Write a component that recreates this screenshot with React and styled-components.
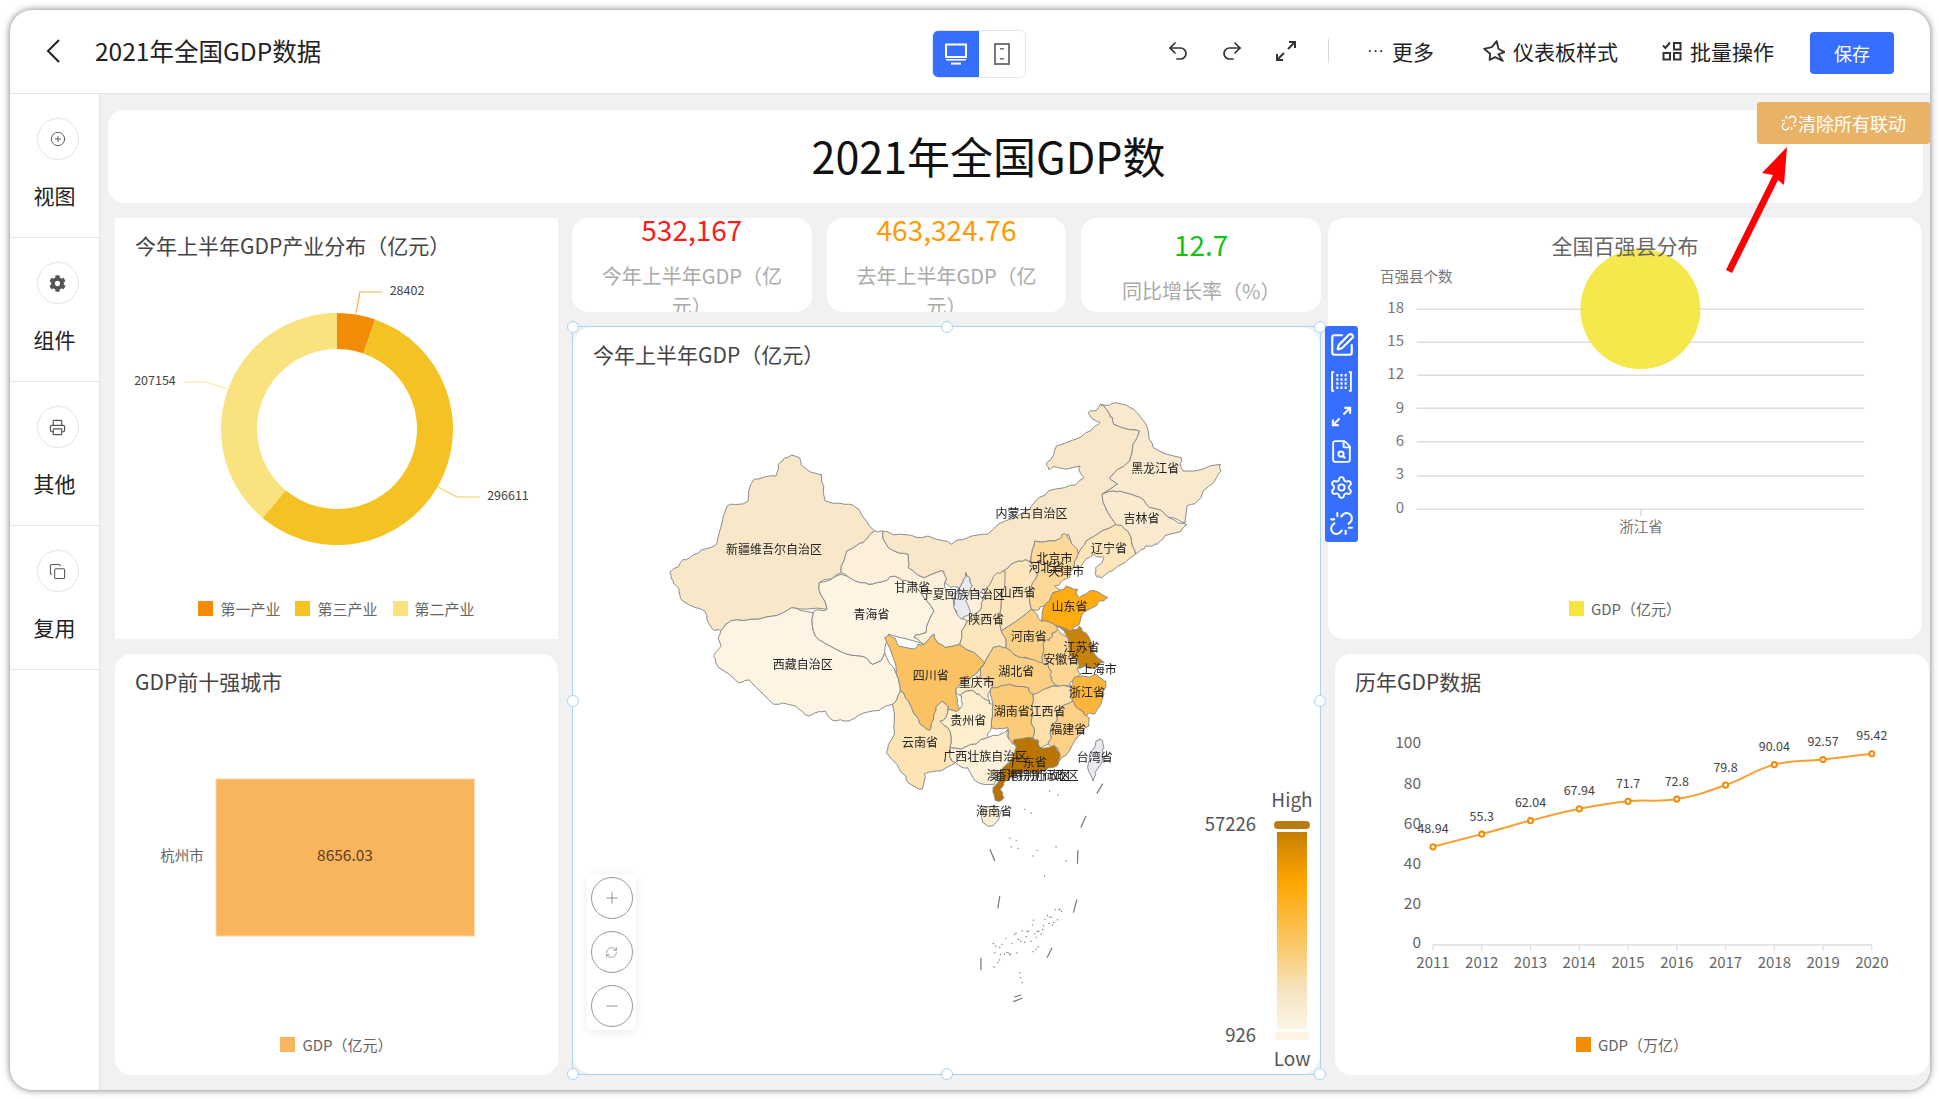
import React from 'react';
import styled, { createGlobalStyle } from 'styled-components';
import { CirclePlus, Copy, FileSearch, Minus, Plus, Printer, Redo2, RefreshCw, Settings, SquarePen, Undo2, Unlink } from 'lucide-react';
import { FaCog } from 'react-icons/fa';

const GlobalStyle = createGlobalStyle`
  html, body { margin: 0; padding: 0; background: #fff; }
  * { box-sizing: border-box; }
  body { font-family: "Noto Sans CJK SC", "Noto Sans", sans-serif; color: #222; }
`;

const arc = (cx, cy, R, r, from, to) => {
  const pt = (rad, deg) => {
    const a = ((deg - 90) * Math.PI) / 180;
    return `${cx + rad * Math.cos(a)} ${cy + rad * Math.sin(a)}`;
  };
  const big = to - from > 180 ? 1 : 0;
  return `M${pt(R, from)} A${R} ${R} 0 ${big} 1 ${pt(R, to)} L${pt(r, to)} A${r} ${r} 0 ${big} 0 ${pt(r, from)} Z`;
};

const smooth = (pts) => {
  let d = `M${pts[0][0]} ${pts[0][1]}`;
  for (let i = 0; i < pts.length - 1; i++) {
    const p0 = pts[i - 1] || pts[i];
    const p1 = pts[i];
    const p2 = pts[i + 1];
    const p3 = pts[i + 2] || p2;
    d += ` C${p1[0] + (p2[0] - p0[0]) / 5} ${p1[1] + (p2[1] - p0[1]) / 5} ${p2[0] - (p3[0] - p1[0]) / 5} ${p2[1] - (p3[1] - p1[1]) / 5} ${p2[0]} ${p2[1]}`;
  }
  return d;
};

// map outlines were traced on a stretched crop, mapX/mapY bring them back to page pixels
const mapX = (x) => 640 + x / 2.53;
const mapY = (y) => 380 + y / 3;

const frac = (v) => v - Math.floor(v);

const wobble = (pts, amp) => {
  const out = [];
  pts.forEach((p, i) => {
    const q = pts[(i + 1) % pts.length];
    const h = Math.sin((p[0] + q[0]) * 12.9898 + (p[1] + q[1]) * 78.233) * 43758.5453;
    out.push(p);
    out.push([(p[0] + q[0]) / 2 + (frac(h) - 0.5) * amp, (p[1] + q[1]) / 2 + (frac(h * 7) - 0.5) * amp]);
  });
  return out;
};

const shape = (str) => {
  const pts = str.split(' ').map((s) => s.split(',').map(Number));
  return wobble(wobble(pts, 14), 7).map((p) => `${mapX(p[0]).toFixed(1)},${mapY(p[1]).toFixed(1)}`).join(' ');
};

const provinces = [
  ['#f8e7c9', '80,570 110,535 150,515 195,490 222,375 275,360 290,295 345,285 355,245 385,222 405,230 420,262 460,280 470,360 520,370 555,385 595,450 565,485 525,510 510,575 455,605 475,685 385,680 300,715 230,720 205,750 185,745 165,690 110,660 100,630 85,600'],
  ['#fdf4e4', '205,750 230,720 300,715 385,680 440,695 445,765 490,800 560,825 590,850 620,815 650,880 660,930 640,970 570,995 530,1020 500,1020 470,990 430,1005 395,975 340,970 280,900 250,905 200,860 190,820 205,790'],
  ['#fdf4e4', '455,605 510,580 560,605 600,605 645,585 690,605 745,690 725,755 695,770 720,790 630,760 620,815 590,850 560,825 490,800 445,765 440,695 475,685'],
  ['#fdf1dc', '510,575 525,510 565,485 595,450 615,450 630,500 680,520 680,560 720,590 770,570 772,605 790,640 800,690 830,720 810,790 775,800 745,760 720,790 695,770 725,755 745,690 690,605 645,585 600,605 560,605'],
  ['#f8e7c9', '615,450 680,462 730,465 790,490 830,470 880,460 950,410 1010,350 1075,320 1125,290 1115,255 1060,260 1035,265 1030,245 1055,195 1130,155 1165,125 1135,95 1165,70 1190,100 1200,130 1265,150 1240,240 1190,290 1210,310 1170,340 1205,430 1130,480 1110,520 1085,460 1050,480 1000,480 990,540 960,540 920,570 880,620 860,640 835,630 835,590 825,575 810,620 772,605 770,570 720,590 680,560 680,520 630,500'],
  ['#f8e9cf', '1165,70 1205,65 1250,85 1285,140 1300,200 1370,230 1375,270 1470,250 1460,290 1420,350 1385,375 1380,425 1340,410 1310,385 1290,380 1255,345 1215,330 1170,340 1210,310 1190,290 1240,240 1265,150 1200,130 1190,100'],
  ['#f9ead0', '1170,340 1215,330 1255,345 1290,380 1310,385 1340,410 1385,430 1340,460 1310,490 1280,495 1255,520 1235,450 1205,430'],
  ['#fde6bc', '1110,520 1130,480 1205,430 1235,450 1255,520 1195,570 1170,590 1160,590 1155,570 1175,530 1150,520 1115,560 1100,550'],
  ['#fdd898', '990,540 1000,480 1050,480 1075,458 1090,480 1110,520 1100,550 1085,590 1050,615 1080,630 1046,635 1024,675 991,685 990,620 1005,575'],
  ['#fde6bc', '920,570 960,540 990,540 1005,575 990,620 991,685 915,750 915,660'],
  ['#fde6bc', '880,620 905,575 925,570 915,660 915,750 927,800 894,800 873,845 810,790 830,720 860,690 875,650'],
  ['#fdf1dc', '835,630 860,640 875,650 860,690 830,720 800,690 790,640 810,620'],
  ['#e8eaf0', '810,620 825,575 835,590 835,630 825,660 835,700 815,715 795,680'],
  ['#fcd084', '915,750 991,685 1016,720 1054,735 1058,745 1041,770 1024,780 1020,845 991,835 970,830 927,800'],
  ['#ffab12', '1024,675 1046,635 1079,615 1109,625 1113,650 1138,630 1185,650 1160,665 1138,685 1113,730 1088,750 1054,735 1016,720'],
  ['#c9820a', '1054,735 1088,750 1113,735 1138,770 1147,810 1176,845 1155,860 1130,855 1109,860 1105,835 1088,820 1084,770'],
  ['#fdd694', '1024,780 1041,770 1058,745 1084,770 1088,820 1105,835 1109,860 1117,880 1096,900 1092,916 1054,912 1037,880 1033,850 1020,845'],
  ['#fdb63b', '1117,885 1155,880 1180,900 1172,950 1151,1000 1130,1005 1105,980 1096,960 1092,920 1096,900'],
  ['#fdd088', '1096,960 1105,980 1130,1005 1138,1010 1121,1050 1096,1090 1062,1140 1058,1100 1033,1090 1041,1040 1062,990'],
  ['#fee0aa', '995,940 1045,915 1092,920 1096,960 1062,990 1041,1040 1033,1090 1012,1100 1003,1080 995,1070 991,1020'],
  ['#fcd084', '894,800 927,800 970,830 1020,845 1033,850 1037,880 1054,912 995,940 982,920 936,910 890,920 885,900 860,890 873,845'],
  ['#fccb77', '890,920 936,910 982,920 995,940 991,1020 995,1070 961,1075 944,1090 932,1040 890,1040 894,970'],
  ['#fdf1da', '785,1100 830,1095 880,1070 932,1045 944,1090 949,1080 953,1110 940,1145 923,1170 898,1210 850,1200 830,1160 800,1145 785,1130'],
  ['#b97500', '945,1080 974,1072 1002,1078 1012,1098 1050,1093 1064,1120 1060,1148 1029,1165 995,1175 940,1185 922,1205 912,1225 920,1252 900,1258 894,1220 918,1170 936,1145 950,1110'],
  ['#fbeed5', '873,1280 898,1275 915,1295 906,1320 881,1335 868,1320'],
  ['#e8eaf0', '1155,1080 1172,1078 1172,1110 1155,1170 1147,1200 1134,1160 1138,1130'],
  ['#fbc264', '620,770 630,760 655,795 700,800 720,790 745,760 775,800 810,790 873,845 850,880 810,910 800,930 810,985 780,985 765,960 745,1000 735,1048 710,1030 680,960 660,930 650,880'],
  ['#fdeccb', '873,845 860,890 885,900 890,920 885,960 860,940 830,930 815,945 800,930 810,910 850,880'],
  ['#fdeecd', '815,945 830,930 860,940 885,960 894,970 890,1040 880,1070 830,1095 785,1100 780,1040 760,1020 780,985 810,985'],
  ['#fde4b5', '640,970 660,930 680,960 710,1030 735,1048 745,1000 765,960 780,985 760,1020 780,1040 785,1100 785,1130 800,1145 760,1170 720,1180 715,1225 680,1205 660,1170 625,1115 645,1060'],
];

const mapLabels = [
  ['黑龙江省', 1305, 263], ['内蒙古自治区', 992, 400], ['吉林省', 1270, 415], ['辽宁省', 1188, 503],
  ['新疆维吾尔自治区', 340, 508], ['甘肃省', 690, 622], ['宁夏回族自治区', 818, 643], ['山西省', 957, 635],
  ['北京市', 1050, 535], ['河北省', 1030, 560], ['天津市', 1080, 572], ['山东省', 1088, 678],
  ['青海省', 587, 703], ['陕西省', 877, 718], ['河南省', 985, 768], ['江苏省', 1118, 800],
  ['安徽省', 1067, 838], ['上海市', 1162, 867], ['西藏自治区', 413, 851], ['四川省', 737, 884],
  ['湖北省', 953, 872], ['重庆市', 853, 905], ['浙江省', 1132, 936], ['湖南省', 942, 992],
  ['江西省', 1032, 993], ['贵州省', 832, 1021], ['福建省', 1085, 1047], ['云南省', 710, 1086],
  ['广西壮族自治区', 875, 1127], ['广东省', 985, 1145], ['台湾省', 1152, 1132], ['澳门特别行政区', 985, 1185],
  ['香港特别行政区', 1005, 1185], ['海南省', 897, 1293],
];

// nine-dash line and islands, taken from the lower crop: x = 560 + zx / 2.01, y = 760 + zy / 3
const dashes = [
  [1092, 68, 1080, 98], [1058, 165, 1048, 200], [1042, 268, 1041, 308], [1040, 415, 1033, 455], [990, 560, 980, 590],
  [847, 590, 847, 628], [885, 405, 881, 442], [865, 265, 875, 300], [914, 708, 928, 702], [912, 722, 931, 711],
];
const dots = [
  [985, 90], [1002, 102], [935, 145], [948, 156], [905, 232], [918, 238], [908, 258], [922, 262], [960, 268], [952, 285],
  [1018, 300], [998, 258], [975, 345], [925, 635], [927, 650], [930, 665], [958, 565], [952, 572], [962, 558], [875, 575], [885, 560],
];
for (let i = 0; i < 46; i++) {
  const along = frac(i * 0.618);
  dots.push([872 + along * 140, 585 - along * 130 + (frac(Math.sin(i * 9.7) * 4375.85) - 0.5) * 75]);
}

const donut = [
  { from: 0, to: 19.2, color: '#f28c07' },
  { from: 19.2, to: 219.9, color: '#f5c224' },
  { from: 219.9, to: 360, color: '#fae27f' },
];

const years = [2011, 2012, 2013, 2014, 2015, 2016, 2017, 2018, 2019, 2020];
const gdp = [48.94, 55.3, 62.04, 67.94, 71.7, 72.8, 79.8, 90.04, 92.57, 95.42];
const gdpPts = gdp.map((v, i) => [1433 + i * 48.76, 944.7 - v * 2]);

const App = () => (
  <Page>
    <GlobalStyle />
    <Window>
      <Header>
        <HeaderLeft>
          <svg width="16" height="26" viewBox="0 0 16 26">
            <polyline points="14,2 3,13 14,24" fill="none" stroke="#222" strokeWidth="2" />
          </svg>
          <PageName>2021年全国GDP数据</PageName>
        </HeaderLeft>
        <DeviceToggle>
          <DeviceBtn $active>
            <svg width="24" height="22" viewBox="0 0 24 22">
              <rect x="2" y="1.5" width="20" height="12.5" fill="none" stroke="#fff" strokeWidth="2" />
              <rect x="2" y="16" width="20" height="1.6" fill="#fff" />
              <rect x="7" y="19.6" width="10" height="2" fill="#fff" />
            </svg>
          </DeviceBtn>
          <DeviceBtn>
            <svg width="16" height="22" viewBox="0 0 16 22">
              <rect x="1" y="1" width="14" height="20" fill="none" stroke="#777" strokeWidth="2" />
              <rect x="6" y="5" width="4" height="1.6" fill="#777" />
              <rect x="6" y="15" width="4" height="1.6" fill="#777" />
            </svg>
          </DeviceBtn>
        </DeviceToggle>
        <HeaderRight>
          <ToolIcon><Undo2 size={24} strokeWidth={1.7} /></ToolIcon>
          <ToolIcon $gap={30}><Redo2 size={24} strokeWidth={1.7} /></ToolIcon>
          <ToolIcon $gap={30}>
            <svg width="24" height="24" viewBox="0 0 24 24" fill="none" stroke="#333" strokeWidth="2">
              <path d="M14 10l7-7M15 3h6v6M10 14l-7 7M3 15v6h6" />
            </svg>
          </ToolIcon>
          <Divider />
          <ToolText $gap={38}><Dots>···</Dots>更多</ToolText>
          <ToolText $gap={49}>
            <svg width="22" height="22" viewBox="0 0 20 20" fill="none" stroke="#333" strokeWidth="1.7" strokeLinejoin="round">
              <path d="M12.5 1L14 8l5.5 3-5.5 2 4 6-7-3.5L6 18l.5-5.5L1 8l7-1.5z" />
            </svg>
            仪表板样式
          </ToolText>
          <ToolText $gap={44}>
            <svg width="20" height="20" viewBox="0 0 20 20" fill="none" stroke="#333" strokeWidth="2">
              <path d="M1 4.5l2.5 2.5L8 1.5" />
              <rect x="12" y="2" width="6.5" height="6.5" />
              <rect x="1.5" y="12" width="6.5" height="6.5" />
              <rect x="12" y="12" width="6.5" height="6.5" />
            </svg>
            批量操作
          </ToolText>
          <SaveButton>保存</SaveButton>
        </HeaderRight>
      </Header>
      <Body>
        <Sidebar>
          <SideItem>
            <SideCircle><CirclePlus size={16} strokeWidth={1.4} /></SideCircle>
            <SideLabel>视图</SideLabel>
          </SideItem>
          <SideItem>
            <SideCircle><FaCog size={17} /></SideCircle>
            <SideLabel>组件</SideLabel>
          </SideItem>
          <SideItem>
            <SideCircle><Printer size={17} strokeWidth={1.7} /></SideCircle>
            <SideLabel>其他</SideLabel>
          </SideItem>
          <SideItem>
            <SideCircle><Copy size={17} strokeWidth={1.5} /></SideCircle>
            <SideLabel>复用</SideLabel>
          </SideItem>
        </Sidebar>
        <Main>
          <TitleBar>2021年全国GDP数</TitleBar>
          <Board>
            <Column>
              <Card $square>
                <CardTitle>今年上半年GDP产业分布（亿元）</CardTitle>
                <ChartSvg viewBox="115 276 443 303">
                  {donut.map((s) => (
                    <path key={s.color} d={arc(337, 429, 116, 80, s.from, s.to)} fill={s.color} />
                  ))}
                  <polyline points="356,313 360,292 382,292" fill="none" stroke="#f6a94a" strokeWidth="1.2" />
                  <polyline points="184,382 206,382 227,389" fill="none" stroke="#fbe69a" strokeWidth="1.2" />
                  <polyline points="438,487 457,497 480,497" fill="none" stroke="#f7cf55" strokeWidth="1.2" />
                  <ChartText x="407" y="295" textAnchor="middle" $size={12.5}>28402</ChartText>
                  <ChartText x="155" y="385" textAnchor="middle" $size={12.5}>207154</ChartText>
                  <ChartText x="508" y="500" textAnchor="middle" $size={12.5}>296611</ChartText>
                </ChartSvg>
                <Legend>
                  <LegendItem $color="#f28c07">第一产业</LegendItem>
                  <LegendItem $color="#f5c224">第三产业</LegendItem>
                  <LegendItem $color="#fae27f">第二产业</LegendItem>
                </Legend>
              </Card>
              <Card>
                <CardTitle>GDP前十强城市</CardTitle>
                <ChartSvg viewBox="115 712 443 303">
                  <rect x="216" y="779" width="258.5" height="157" fill="#f9b55e" stroke="#fcd9a8" />
                  <ChartText x="345" y="861" textAnchor="middle" $size={15.5} $fill="#5a4020">8656.03</ChartText>
                  <ChartText x="182" y="861" textAnchor="middle" $size={14.5} $fill="#666">杭州市</ChartText>
                </ChartSvg>
                <Legend>
                  <LegendItem $color="#f9b55e">GDP（亿元）</LegendItem>
                </Legend>
              </Card>
            </Column>
            <MiddleColumn>
              <KpiRow>
                <KpiCard>
                  <KpiValue $color="#ff1a1a">532,167</KpiValue>
                  <KpiLabel>今年上半年GDP（亿元）</KpiLabel>
                </KpiCard>
                <KpiCard>
                  <KpiValue $color="#ff9a05">463,324.76</KpiValue>
                  <KpiLabel>去年上半年GDP（亿元）</KpiLabel>
                </KpiCard>
                <KpiCard>
                  <KpiValue $color="#12c212">12.7</KpiValue>
                  <KpiLabel>同比增长率（%）</KpiLabel>
                </KpiCard>
              </KpiRow>
              <SelectionFrame>
                <MapCard>
                  <CardTitle>今年上半年GDP（亿元）</CardTitle>
                  <MapSvg viewBox="573.5 384 746 690">
                    {provinces.map(([color, pts]) => (
                      <polygon key={pts} points={shape(pts)} fill={color} stroke="#8b8b8b" strokeWidth="1" strokeLinejoin="round" />
                    ))}
                    {dashes.map((d) => (
                      <line key={d.join()} x1={560 + d[0] / 2.01} y1={760 + d[1] / 3} x2={560 + d[2] / 2.01} y2={760 + d[3] / 3} stroke="#777" strokeWidth="1.2" />
                    ))}
                    {dots.map((d, i) => (
                      <circle key={i} cx={560 + d[0] / 2.01} cy={760 + d[1] / 3} r="0.7" fill="#777" />
                    ))}
                    {mapLabels.map(([name, x, y]) => (
                      <ChartText key={name} x={mapX(x)} y={mapY(y) + 4} textAnchor="middle" $size={12} $fill="#222">{name}</ChartText>
                    ))}
                  </MapSvg>
                  <ZoomPanel>
                    <ZoomButton><Plus size={18} strokeWidth={1.2} /></ZoomButton>
                    <ZoomButton><RefreshCw size={13} strokeWidth={1.4} /></ZoomButton>
                    <ZoomButton><Minus size={18} strokeWidth={1.2} /></ZoomButton>
                  </ZoomPanel>
                  <VisualMap>
                    <VisualText>High</VisualText>
                    <VisualValue $top={24}>57226</VisualValue>
                    <VisualCap $color="#b87c12" $margin="11px 0 0" />
                    <VisualBar />
                    <VisualCap $color="#fdf4e3" $margin="3px 0 0" />
                    <VisualValue $top={235}>926</VisualValue>
                    <VisualText $margin="7px 0 0">Low</VisualText>
                  </VisualMap>
                </MapCard>
                <Handle $x="0%" $y="0%" />
                <Handle $x="50%" $y="0%" />
                <Handle $x="100%" $y="0%" />
                <Handle $x="0%" $y="50%" />
                <Handle $x="100%" $y="50%" />
                <Handle $x="0%" $y="100%" />
                <Handle $x="50%" $y="100%" />
                <Handle $x="100%" $y="100%" />
                <SideTools>
                  <SquarePen size={26} strokeWidth={2} />
                  <svg width="25" height="25" viewBox="0 0 24 24" fill="none" stroke="#fff" strokeWidth="1.8">
                    <path d="M5 3H3v18h2M19 3h2v18h-2" />
                    <path d="M7 6h2M11 6h2M15 6h2M7 10h2M11 10h2M15 10h2M7 14h2M11 14h2M15 14h2M7 18h2M11 18h2M15 18h2" strokeWidth="2.4" />
                  </svg>
                  <svg width="23" height="23" viewBox="0 0 24 24" fill="none" stroke="#fff" strokeWidth="2.2">
                    <path d="M14 10l7-7M15 3h6v6M10 14l-7 7M3 15v6h6" />
                  </svg>
                  <FileSearch size={25} strokeWidth={1.8} />
                  <Settings size={25} strokeWidth={1.8} />
                  <Unlink size={25} strokeWidth={2} />
                </SideTools>
              </SelectionFrame>
            </MiddleColumn>
            <RightColumn>
              <Card $width={594}>
                <CardTitle $center $color="#666">全国百强县分布</CardTitle>
                <ChartSvg viewBox="1328 276 594 303">
                  {[309.3, 342.3, 375.3, 408.3, 441.7, 476, 509.3].map((y) => (
                    <line key={y} x1="1416.7" x2="1864.5" y1={y} y2={y} stroke="#ddd" strokeWidth="1.5" />
                  ))}
                  <ellipse cx="1640.4" cy="309" rx="60" ry="60" fill="#f4e63e" fillOpacity="0.92" />
                  <line x1="1641" x2="1641" y1="509" y2="516" stroke="#ddd" strokeWidth="1.5" />
                  <ChartText x="1380" y="282" $size={14.5} $fill="#777">百强县个数</ChartText>
                  {[['18', 307], ['15', 340.5], ['12', 373.5], ['9', 407], ['6', 440.5], ['3', 473.5], ['0', 507]].map(([t, y]) => (
                    <ChartText key={t} x="1404" y={y + 5.5} textAnchor="end" $size={15} $fill="#777">{t}</ChartText>
                  ))}
                  <ChartText x="1641" y="532" textAnchor="middle" $size={14.5} $fill="#777">浙江省</ChartText>
                </ChartSvg>
                <Legend>
                  <LegendItem $color="#f4e63e">GDP（亿元）</LegendItem>
                </Legend>
              </Card>
              <Card $width={594} $shift={7}>
                <CardTitle>历年GDP数据</CardTitle>
                <ChartSvg viewBox="1335 712 594 303">
                  <line x1="1433" x2="1872" y1="945" y2="945" stroke="#ddd" strokeWidth="1.5" />
                  {[[100, 742.7], [80, 783], [60, 823], [40, 863], [20, 903], [0, 942.7]].map(([v, y]) => (
                    <ChartText key={v} x="1421" y={y + 5.5} textAnchor="end" $size={15.5} $fill="#666">{v}</ChartText>
                  ))}
                  {years.map((y, i) => (
                    <g key={y}>
                      <line x1={gdpPts[i][0]} x2={gdpPts[i][0]} y1="945" y2="951" stroke="#ddd" strokeWidth="1.2" />
                      <ChartText x={gdpPts[i][0]} y="967.5" textAnchor="middle" $size={15} $fill="#666">{y}</ChartText>
                    </g>
                  ))}
                  <path d={smooth(gdpPts)} fill="none" stroke="#f5a030" strokeWidth="2" />
                  {gdpPts.map((p, i) => (
                    <g key={i}>
                      <circle cx={p[0]} cy={p[1]} r="2.6" fill="#fff" stroke="#f28c07" strokeWidth="2" />
                      <ChartText x={p[0]} y={p[1] - 13.5} textAnchor="middle" $size={12.5} $fill="#444">{gdp[i]}</ChartText>
                    </g>
                  ))}
                </ChartSvg>
                <Legend>
                  <LegendItem $color="#f28c07">GDP（万亿）</LegendItem>
                </Legend>
              </Card>
            </RightColumn>
          </Board>
          <ClearLinks>
            <Unlink size={16} strokeWidth={2} />
            清除所有联动
          </ClearLinks>
          <ArrowMark viewBox="1720 140 75 140" width="75" height="140">
            <path d="M1787 147L1762 173L1773 175L1726 270L1732 273L1778 180L1784 185Z" fill="#ff0000" />
          </ArrowMark>
        </Main>
      </Body>
    </Window>
  </Page>
);

export default App;

const Page = styled.div`
  width: 1940px;
  height: 1100px;
  padding: 10px;
  background: #fff;
`;

const Window = styled.div`
  width: 1920px;
  height: 1080px;
  display: flex;
  flex-direction: column;
  background: #fff;
  border-radius: 22px;
  overflow: hidden;
  box-shadow: 0 0 7px rgba(0, 0, 0, 0.55);
`;

const Header = styled.header`
  height: 84px;
  flex: none;
  display: grid;
  grid-template-columns: 922px 94px 1fr;
  align-items: center;
  padding-bottom: 2px;
  border-bottom: 1px solid #e4e4e4;
`;

const HeaderLeft = styled.div`
  display: flex;
  align-items: center;
  gap: 34px;
  padding-left: 35px;
`;

const PageName = styled.div`
  font-size: 24.5px;
  color: #222;
`;

const DeviceToggle = styled.div`
  display: flex;
  height: 48px;
  margin-top: 7px;
  border: 1px solid #e3e4ec;
  border-radius: 6px;
  overflow: hidden;
`;

const DeviceBtn = styled.div`
  flex: 1;
  display: flex;
  align-items: center;
  justify-content: center;
  background: ${(p) => (p.$active ? '#366eff' : '#fff')};
`;

const HeaderRight = styled.div`
  display: flex;
  align-items: center;
  justify-content: flex-end;
  padding-right: 36px;
`;

const ToolIcon = styled.div`
  display: flex;
  margin-left: ${(p) => p.$gap || 0}px;
  color: #333;
`;

const Divider = styled.div`
  width: 1.5px;
  height: 24px;
  margin-left: 30px;
  background: #d8dae2;
`;

const ToolText = styled.div`
  display: flex;
  align-items: center;
  gap: 8px;
  margin-left: ${(p) => p.$gap || 0}px;
  font-size: 21px;
  color: #222;
`;

const Dots = styled.span`
  font-family: "Liberation Sans", sans-serif;
  font-size: 17px;
`;

const SaveButton = styled.button`
  width: 84px;
  height: 42px;
  margin: 5px 0 0 36px;
  border: none;
  border-radius: 4px;
  background: #366eff;
  color: #fff;
  font-family: inherit;
  font-size: 18px;
`;

const Body = styled.div`
  flex: 1;
  display: flex;
  min-height: 0;
`;

const Sidebar = styled.aside`
  width: 90px;
  flex: none;
  border-right: 1px solid #e4e4e4;
`;

const SideItem = styled.div`
  height: 144px;
  display: flex;
  flex-direction: column;
  align-items: center;
  padding-top: 24px;
  border-bottom: 1px solid #e6e6ea;
`;

const SideCircle = styled.div`
  width: 42px;
  height: 42px;
  margin-left: 6px;
  display: flex;
  align-items: center;
  justify-content: center;
  border: 1px solid #e2e2ec;
  border-radius: 50%;
  color: #555;
`;

const SideLabel = styled.div`
  margin-top: 20px;
  font-size: 21px;
  line-height: 30px;
  color: #222;
`;

const Main = styled.main`
  flex: 1;
  position: relative;
  background: #f1f1f1;
  padding-top: 16px;
`;

const TitleBar = styled.div`
  height: 93px;
  margin: 0 7px 0 8px;
  padding: 0 54px 4px 0;
  display: flex;
  align-items: center;
  justify-content: center;
  background: #fff;
  border-radius: 16px;
  font-size: 43px;
  color: #111;
`;

const Board = styled.div`
  display: flex;
  margin: 15px 0 0 15px;
`;

const Column = styled.div`
  width: 443px;
  display: flex;
  flex-direction: column;
  gap: 15px;
`;

const MiddleColumn = styled.div`
  width: 749px;
  margin-left: 14px;
  display: flex;
  flex-direction: column;
  gap: 14px;
`;

const RightColumn = styled.div`
  width: 601px;
  margin-left: 7px;
  display: flex;
  flex-direction: column;
  gap: 15px;
`;

const Card = styled.section`
  position: relative;
  width: ${(p) => (p.$width ? `${p.$width}px` : 'auto')};
  height: 421px;
  margin-left: ${(p) => p.$shift || 0}px;
  background: #fff;
  border-radius: ${(p) => (p.$square ? '0' : '16px')};
`;

const CardTitle = styled.h3`
  position: relative;
  z-index: 1;
  height: 58px;
  margin: 0;
  padding: 13px 20px 0;
  font-size: 21px;
  font-weight: 400;
  line-height: 28px;
  color: ${(p) => p.$color || '#444'};
  text-align: ${(p) => (p.$center ? 'center' : 'left')};
`;

const ChartSvg = styled.svg`
  display: block;
  width: 100%;
  height: 303px;
  overflow: visible;
`;

const ChartText = styled.text`
  font-size: ${(p) => p.$size || 13}px;
  fill: ${(p) => p.$fill || '#444'};
`;

const Legend = styled.div`
  height: 60px;
  padding-bottom: 2px;
  display: flex;
  align-items: center;
  justify-content: center;
  gap: 15px;
`;

const LegendItem = styled.div`
  display: flex;
  align-items: center;
  gap: 7px;
  font-size: 15px;
  color: #666;

  &::before {
    content: '';
    width: 15px;
    height: 15px;
    background: ${(p) => p.$color};
  }
`;

const KpiRow = styled.div`
  display: flex;
  gap: 15px;
`;

const KpiCard = styled.div`
  width: 240px;
  height: 94px;
  padding: 0 20px;
  display: flex;
  flex-direction: column;
  align-items: center;
  justify-content: center;
  overflow: hidden;
  background: #fff;
  border-radius: 16px;
  text-align: center;
`;

const KpiValue = styled.div`
  flex: none;
  height: 52px;
  font-size: 28px;
  line-height: 52px;
  transform: translateY(-1px);
  color: ${(p) => p.$color};
`;

const KpiLabel = styled.div`
  flex: none;
  padding: 5px 0;
  font-size: 20px;
  line-height: 30px;
  color: #aaa;
`;

const SelectionFrame = styled.div`
  position: relative;
  z-index: 2;
  height: 749px;
  border: 1.5px solid #a9d3f5;
`;

const MapCard = styled.div`
  position: relative;
  height: 100%;
  background: #fff;
  border-radius: 20px;
`;

const MapSvg = styled.svg`
  display: block;
  width: 746px;
  height: 690px;
  filter: blur(0.35px);
`;

const ZoomPanel = styled.div`
  position: absolute;
  left: 14px;
  bottom: 44px;
  width: 49px;
  padding: 3px 0;
  display: flex;
  flex-direction: column;
  align-items: center;
  gap: 12px;
  background: #fff;
  border-radius: 6px;
  box-shadow: 0 2px 10px rgba(0, 0, 0, 0.08);
`;

const ZoomButton = styled.div`
  width: 42px;
  height: 42px;
  display: flex;
  align-items: center;
  justify-content: center;
  border: 1.5px solid #999;
  border-radius: 50%;
  color: #888;
`;

const VisualMap = styled.div`
  position: absolute;
  right: 8px;
  top: 461px;
  width: 40px;
  display: flex;
  flex-direction: column;
  align-items: center;
`;

const VisualText = styled.div`
  margin: ${(p) => p.$margin || '0'};
  font-size: 19px;
  line-height: 22px;
  color: #555;
`;

const VisualValue = styled.div`
  position: absolute;
  right: calc(100% + 16px);
  top: ${(p) => p.$top}px;
  font-size: 18.5px;
  line-height: 22px;
  color: #555;
`;

const VisualCap = styled.div`
  width: 36px;
  height: 8px;
  margin: ${(p) => p.$margin};
  border-radius: 4px;
  background: ${(p) => p.$color};
`;

const VisualBar = styled.div`
  width: 30px;
  height: 197px;
  margin-top: 3px;
  background: linear-gradient(#c47f00 0%, #ffa500 25%, #fbc96b 58%, #f5e5c4 82%, #fdf5e6 100%);
`;

const Handle = styled.div`
  position: absolute;
  left: ${(p) => p.$x};
  top: ${(p) => p.$y};
  width: 12px;
  height: 12px;
  transform: translate(-50%, -50%);
  background: #fff;
  border: 1.5px solid #a9d3f5;
  border-radius: 50%;
`;

const SideTools = styled.div`
  position: absolute;
  left: calc(100% + 5px);
  top: -1px;
  width: 33px;
  height: 216px;
  padding: 6px 0;
  display: flex;
  flex-direction: column;
  align-items: center;
  justify-content: space-between;
  background: #366eff;
  border-radius: 3px;
  color: #fff;
`;

const ClearLinks = styled.button`
  position: absolute;
  right: 0;
  top: 8px;
  width: 173px;
  height: 42px;
  display: flex;
  align-items: center;
  justify-content: center;
  gap: 1px;
  border: none;
  border-radius: 3px;
  background: #e8b366;
  color: #fff;
  font-family: inherit;
  font-size: 18px;
`;

const ArrowMark = styled.svg`
  position: absolute;
  z-index: 3;
  left: 1620px;
  top: 46px;
`;
